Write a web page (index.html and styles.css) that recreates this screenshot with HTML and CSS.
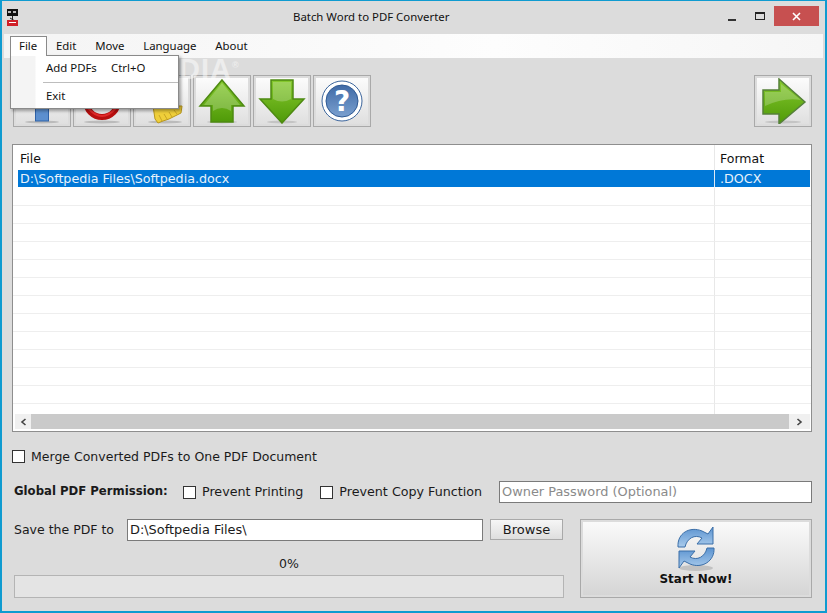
FILE: index.html
```html
<!DOCTYPE html>
<html lang="en">
<head>
    <meta charset="UTF-8">
    <title>Batch Word to PDF Converter</title>
    <link rel="stylesheet" href="styles.css">
</head>
<body>
    <div class="window">
        <div class="titlebar">
            <svg class="app-icon" width="14" height="18" viewBox="0 0 14 18">
                <rect x="1" y="0" width="11" height="7" fill="#111"/>
                <rect x="2" y="2" width="3" height="2" fill="#bbb"/>
                <rect x="7" y="2" width="3" height="2" fill="#bbb"/>
                <path d="M6.500 7v4M4 9l5 3" stroke="#222" fill="none"/>
                <rect x="1" y="11" width="11" height="6" fill="#d02028"/>
                <rect x="3" y="13" width="7" height="1" fill="#fff"/>
            </svg>
            <div class="title">Batch Word to PDF Converter</div>
            <div class="window-controls">
                <span class="ctl-min"></span>
                <span class="ctl-max"></span>
                <span class="ctl-close">
                    <svg width="9" height="9" viewBox="0 0 9 9"><path d="M1 1l7 7M8 1l-7 7" stroke="#fff" stroke-width="1.6"/></svg>
                </span>
            </div>
        </div>

        <div class="menubar">
            <span class="menu-item open">File</span>
            <span class="menu-item">Edit</span>
            <span class="menu-item">Move</span>
            <span class="menu-item">Language</span>
            <span class="menu-item">About</span>
        </div>

        <div class="dropdown">
            <div class="dropdown-row"><span class="dropdown-label">Add PDFs</span><span>Ctrl+O</span></div>
            <div class="dropdown-sep"></div>
            <div class="dropdown-row last"><span class="dropdown-label">Exit</span></div>
        </div>

        <div class="toolbar">
            <div class="tool-btn">
                <svg width="50" height="46" viewBox="0 0 50 46">
                    <ellipse cx="25" cy="44" rx="17" ry="1.500" fill="#bbb"/>
                    <rect x="18.500" y="6" width="13" height="37" fill="#5c8fcf" stroke="#2f62a8"/>
                </svg>
            </div>
            <div class="tool-btn">
                <svg width="50" height="46" viewBox="0 0 50 46">
                    <ellipse cx="25" cy="44" rx="18" ry="1.500" fill="#bbb"/>
                    <circle cx="25" cy="23" r="16" fill="none" stroke="#b80f0f" stroke-width="6"/>
                    <path d="M11 30Q25 46 39 30" fill="none" stroke="#e02a2a" stroke-width="2"/>
                </svg>
            </div>
            <div class="tool-btn">
                <svg width="50" height="46" viewBox="0 0 50 46">
                    <ellipse cx="28" cy="44" rx="17" ry="1.500" fill="#bbb"/>
                    <path d="M16 28L45 28 44 35 38 38 32 41 26 43 21 45 18 41z" fill="#efcf3a" stroke="#b8971e"/>
                    <path d="M22 37l3 6M27 36l3 5M32 34l3 5M37 32l3 4" stroke="#c9a524"/>
                </svg>
            </div>
            <div class="tool-btn">
                <svg width="50" height="46" viewBox="0 0 50 46">
                    <ellipse cx="25" cy="44" rx="15" ry="1.500" fill="#c4c4c4"/>
                    <path d="M25 2L47 28H36V44H14V28H3z" fill="url(#grad-up)" stroke="#4e8a12" stroke-width="1.500"/>
                    <path d="M25 5L43 27H34V33Q25 27 16 33V27H7z" fill="#fff" opacity=".22"/>
                </svg>
            </div>
            <div class="tool-btn">
                <svg width="50" height="46" viewBox="0 0 50 46">
                    <ellipse cx="25" cy="44" rx="15" ry="1.500" fill="#c4c4c4"/>
                    <path d="M25 45L47 21H36V2H14V21H3z" fill="url(#grad-up)" stroke="#4e8a12" stroke-width="1.500"/>
                    <path d="M16 4H34V21Q25 26 16 21z" fill="#fff" opacity=".22"/>
                </svg>
            </div>
            <div class="tool-btn">
                <svg width="44" height="44" viewBox="0 0 44 44">
                    <circle cx="22" cy="22" r="20" fill="#fff" stroke="#3b659c"/>
                    <circle cx="22" cy="22" r="16" fill="url(#grad-help)" stroke="#2f5a94"/>
                    <text x="22" y="32" text-anchor="middle" class="help-mark">?</text>
                </svg>
            </div>
            <div class="tool-spacer"></div>
            <div class="tool-btn">
                <svg width="50" height="46" viewBox="0 0 50 46">
                    <ellipse cx="25" cy="44" rx="18" ry="1.500" fill="#c4c4c4"/>
                    <path d="M47 24L21 1V12H5V36H21V46z" fill="url(#grad-up)" stroke="#55803a" stroke-width="1.500"/>
                    <path d="M7 14H23V6L43 22Q26 19 7 28z" fill="#fff" opacity=".22"/>
                </svg>
            </div>
        </div>

        <div class="watermark">SOFTPEDIA<sup>®</sup></div>

        <div class="file-list">
            <div class="file-scroll">
                <table class="file-table">
                    <colgroup><col class="col-file"><col class="col-format"></colgroup>
                    <thead>
                        <tr><th>File</th><th>Format</th></tr>
                    </thead>
                    <tbody>
                        <tr class="selected"><td>D:\Softpedia Files\Softpedia.docx</td><td>.DOCX</td></tr>
                        <tr><td></td><td></td></tr>
                        <tr><td></td><td></td></tr>
                        <tr><td></td><td></td></tr>
                        <tr><td></td><td></td></tr>
                        <tr><td></td><td></td></tr>
                        <tr><td></td><td></td></tr>
                        <tr><td></td><td></td></tr>
                        <tr><td></td><td></td></tr>
                        <tr><td></td><td></td></tr>
                        <tr><td></td><td></td></tr>
                        <tr><td></td><td></td></tr>
                        <tr><td></td><td></td></tr>
                        <tr><td></td><td></td></tr>
                    </tbody>
                </table>
            </div>
            <div class="hscroll">
                <span class="scroll-arrow left">
                    <svg width="7" height="8" viewBox="0 0 7 8"><path d="M5.500 1L2 4l3.500 3" fill="none" stroke="#444" stroke-width="1.6"/></svg>
                </span>
                <span class="scroll-track"></span>
                <span class="scroll-arrow right">
                    <svg width="7" height="8" viewBox="0 0 7 8"><path d="M1.500 1L5 4 1.500 7" fill="none" stroke="#444" stroke-width="1.6"/></svg>
                </span>
            </div>
        </div>

        <div class="merge-row">
            <span class="checkbox"></span>
            <span>Merge Converted PDFs to One PDF Document</span>
        </div>

        <div class="perm-row">
            <span class="perm-label">Global PDF Permission:</span>
            <span class="checkbox"></span>
            <span class="perm-option">Prevent Printing</span>
            <span class="checkbox"></span>
            <span class="perm-option">Prevent Copy Function</span>
            <div class="text-field password">Owner Password (Optional)</div>
        </div>

        <div class="bottom">
            <div class="bottom-left">
                <div class="save-row">
                    <span class="save-label">Save the PDF to</span>
                    <div class="text-field path">D:\Softpedia Files\</div>
                    <div class="browse-btn">Browse</div>
                </div>
                <div class="progress-label">0%</div>
                <div class="progress-bar"></div>
            </div>
            <div class="start-btn">
                <svg width="42" height="50" viewBox="0 0 42 50">
                    <ellipse cx="21" cy="44" rx="17" ry="3" fill="#c2c2c2"/>
                    <path d="M3 23C2 9 15 2 27 7L33 10 38 3V20H22L27 14C20 10 12 14 10 23z" fill="url(#grad-sync)" stroke="#3a6ea8"/>
                    <path d="M39 24C40 37 27 45 15 40L9 37 4 44V27H20L15 33C22 37 30 33 32 24z" fill="url(#grad-sync)" stroke="#3a6ea8"/>
                </svg>
                <span class="start-label">Start Now!</span>
            </div>
        </div>
    </div>

    <svg class="defs" width="0" height="0">
        <defs>
            <linearGradient id="grad-up" x1="0" y1="0" x2="0" y2="1">
                <stop offset="0" stop-color="#86c92e"/>
                <stop offset="1" stop-color="#4f9a08"/>
            </linearGradient>
            <linearGradient id="grad-help" x1="0" y1="0" x2="0" y2="1">
                <stop offset="0" stop-color="#3f6aa6"/>
                <stop offset="1" stop-color="#7ba0cf"/>
            </linearGradient>
            <linearGradient id="grad-sync" x1="0" y1="0" x2="0" y2="1">
                <stop offset="0" stop-color="#5b93d0"/>
                <stop offset="1" stop-color="#a9cbec"/>
            </linearGradient>
        </defs>
    </svg>
</body>
</html>
```

FILE: styles.css
```css
html, body {
    margin: 0;
    padding: 0;
}
body {
    width: 827px;
    height: 613px;
    overflow: hidden;
    font-family: "DejaVu Sans", sans-serif;
    font-size: 12.5px;
    color: #1a1a1a;
}
.window {
    position: relative;
    box-sizing: border-box;
    width: 827px;
    height: 613px;
    background: #dcdcdc;
    border: 2px solid #0f9bd0;
    border-top-width: 1px;
}
.defs {
    position: absolute;
}

/* title bar */
.titlebar {
    display: flex;
    align-items: center;
    height: 33px;
}
.app-icon {
    margin-left: 4px;
}
.title {
    margin-left: 273px;
    margin-top: -3px;
    font-family: "Noto Sans", sans-serif;
    font-size: 11.4px;
    color: #111;
}
.window-controls {
    margin-left: auto;
    margin-right: 6px;
    margin-top: -3px;
    display: flex;
    align-items: center;
}
.ctl-min {
    width: 8px;
    height: 2px;
    background: #333;
    margin-top: 7px;
    margin-right: 19px;
}
.ctl-max {
    box-sizing: border-box;
    width: 10px;
    height: 8px;
    border: 1px solid #222;
    border-top-width: 2px;
    margin-right: 9px;
}
.ctl-close {
    display: flex;
    align-items: center;
    justify-content: center;
    width: 45px;
    height: 20px;
    background: #c75050;
}

/* menu */
.menubar {
    display: flex;
    height: 24px;
    margin: 0 2px;
    background: linear-gradient(to right, #f4f4f4, #fdfdfd 60%, #f6f6f6);
    font-family: "Noto Sans", sans-serif;
    font-size: 11.4px;
    color: #111;
    line-height: 23px;
    padding-left: 6px;
}
.menu-item {
    margin-right: 18.8px;
}
.menu-item.open {
    box-sizing: border-box;
    width: 37px;
    height: 20px;
    margin: 2px 9px 0 0;
    line-height: 18px;
    padding-left: 8px;
    border: 1px solid #8a8a8a;
    border-bottom: 0;
    background: #fff;
    position: relative;
    z-index: 3;
}
.dropdown {
    position: absolute;
    left: 8px;
    top: 54px;
    z-index: 2;
    box-sizing: border-box;
    width: 169px;
    height: 54px;
    background: linear-gradient(to right, #f4f4f4 24px, #fff 25px);
    border: 1px solid #8a8a8a;
    box-shadow: 2px 2px 3px rgba(0, 0, 0, .35);
    font-family: "Noto Sans", sans-serif;
    font-size: 11.4px;
    color: #111;
}
.dropdown-row {
    display: flex;
    height: 26px;
    line-height: 24px;
    padding-left: 35px;
}
.dropdown-row.last {
    line-height: 26px;
}
.dropdown-label {
    width: 65px;
}
.dropdown-sep {
    height: 1px;
    margin-left: 32px;
    background: #bdbdbd;
}

/* toolbar */
.toolbar {
    display: flex;
    gap: 2px;
    margin: 17px 13px 0 11px;
    height: 52px;
}
.tool-btn {
    box-sizing: border-box;
    display: flex;
    align-items: center;
    justify-content: center;
    width: 58px;
    height: 52px;
    border: 1px solid #a9a9a9;
    background: linear-gradient(#fdfdfd, #dedede);
    box-shadow: inset 0 0 0 2px #dcdcdc;
}
.tool-spacer {
    flex: 1;
}
.help-mark {
    font-family: "DejaVu Sans", sans-serif;
    font-weight: bold;
    font-size: 28px;
    fill: #fff;
}
.watermark {
    position: absolute;
    left: 55px;
    top: 52px;
    z-index: 1;
    font-family: "Liberation Sans", sans-serif;
    font-weight: bold;
    font-size: 29px;
    letter-spacing: 1px;
    color: rgba(255, 255, 255, .5);
}
.watermark sup {
    font-size: 9px;
}

/* file table */
.file-list {
    box-sizing: border-box;
    margin: 17px 13px 0 10px;
    height: 288px;
    background: #fff;
    border: 1px solid #8e8e8e;
    display: flex;
    flex-direction: column;
}
.file-scroll {
    height: 269px;
    overflow: hidden;
}
.file-table {
    width: 100%;
    table-layout: fixed;
    border-collapse: separate;
    border-spacing: 0;
    font-size: 12.7px;
}
.col-format {
    width: 96px;
}
.file-table th {
    box-sizing: border-box;
    height: 25px;
    padding: 1px 0 0 7px;
    text-align: left;
    font-weight: normal;
    font-size: 12.5px;
    color: #111;
    border-right: 1px solid #e8e8e8;
}
.file-table td {
    box-sizing: border-box;
    height: 18px;
    padding: 0 0 0 7px;
    line-height: 17px;
    border-bottom: 1px solid #eeeeee;
    border-right: 1px solid #e8e8e8;
}
.file-table th:last-child,
.file-table td:last-child {
    border-right: 0;
    padding-left: 5px;
}
.file-table tr.selected td {
    background: linear-gradient(to right, #fff 5px, #0078d7 5px);
    color: #e8f2fb;
    border-bottom-color: #fff;
    border-right-color: #dfeaf5;
}
.file-table tr.selected td:last-child {
    background: linear-gradient(to left, #fff 1px, #0078d7 1px);
}
.hscroll {
    display: flex;
    height: 15px;
    margin: 0 1px 2px 2px;
    background: #cacaca;
}
.scroll-arrow {
    display: flex;
    align-items: center;
    justify-content: center;
    background: #f0f0f0;
}
.scroll-arrow.left {
    width: 16px;
}
.scroll-arrow.right {
    width: 21px;
}
.scroll-track {
    flex: 1;
}

/* options */
.merge-row {
    display: flex;
    align-items: center;
    gap: 6px;
    margin: 16px 0 0 10px;
    height: 16px;
}
.checkbox {
    box-sizing: border-box;
    width: 13px;
    height: 13px;
    background: #fff;
    border: 1px solid #333;
    flex: none;
}
.perm-row {
    display: flex;
    align-items: center;
    height: 22px;
    margin: 17px 13px 0 12px;
}
.perm-label {
    font-weight: bold;
    font-size: 11.7px;
    width: 169px;
    flex: none;
    white-space: nowrap;
    margin-top: -2px;
}
.perm-row .checkbox {
    margin-right: 6px;
}
.perm-option {
    margin: -2px 17px 0 0;
    font-size: 12.7px;
    white-space: nowrap;
}
.text-field {
    box-sizing: border-box;
    background: #fff;
    border: 1px solid #7a7a7a;
    height: 22px;
    line-height: 20px;
    padding-left: 2px;
    font-size: 12.9px;
}
.password {
    flex: 1;
    color: #8a8a8a;
}

/* save row, progress, start button */
.bottom {
    display: flex;
    margin: 16px 13px 0 12px;
}
.bottom-left {
    width: 550px;
}
.save-row {
    display: flex;
    align-items: center;
    height: 22px;
}
.save-label {
    width: 113px;
    margin-top: -1px;
}
.path {
    width: 356px;
}
.browse-btn {
    box-sizing: border-box;
    width: 73px;
    height: 21px;
    margin: -1px 0 0 7px;
    line-height: 19px;
    font-size: 13px;
    text-align: center;
    border: 1px solid #a9a9a9;
    background: linear-gradient(#f6f6f6, #dedede);
}
.progress-label {
    height: 18px;
    margin-top: 14px;
    line-height: 18px;
    text-align: center;
}
.progress-bar {
    box-sizing: border-box;
    height: 23px;
    margin-top: 2px;
    border: 1px solid #b4b4b4;
    background: #e4e4e4;
}
.start-btn {
    box-sizing: border-box;
    display: flex;
    flex-direction: column;
    align-items: center;
    width: 232px;
    height: 79px;
    margin-left: 16px;
    padding-top: 4px;
    border: 1px solid #a9a9a9;
    background: linear-gradient(#fbfbfb, #d4d4d4);
    box-shadow: inset 0 0 0 2px #dcdcdc;
}
.start-label {
    margin-top: -2px;
    font-weight: bold;
    font-size: 12px;
    color: #111;
}
```
